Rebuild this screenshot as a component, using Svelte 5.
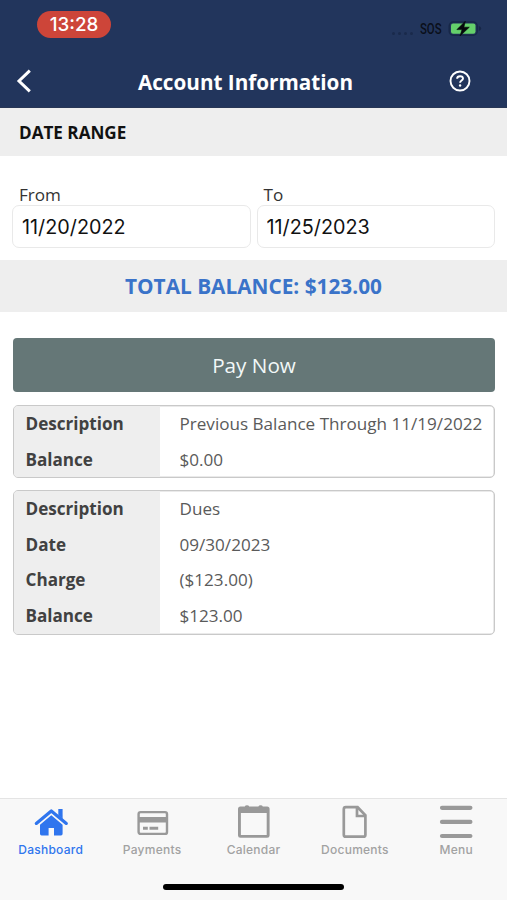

<script>
    let fromDate = "11/20/2022";
    let toDate = "11/25/2023";
    let activeTab = "Dashboard";

    const entries = [
        [
            { label: "Description", value: "Previous Balance Through 11/19/2022" },
            { label: "Balance", value: "$0.00" },
        ],
        [
            { label: "Description", value: "Dues" },
            { label: "Date", value: "09/30/2023" },
            { label: "Charge", value: "($123.00)" },
            { label: "Balance", value: "$123.00" },
        ],
    ];

    const tabs = ["Dashboard", "Payments", "Calendar", "Documents", "Menu"];
</script>

<div class="screen">
    <header>
        <div class="status-bar">
            <span class="clock">13:28</span>
            <div class="status-right">
                <span class="signal"><i></i><i></i><i></i><i></i></span>
                <span class="sos">SOS</span>
                <svg class="battery" width="34" height="18" viewBox="0 0 34 18">
                    <rect x="1.2" y="2" width="28" height="13.2" rx="4" fill="none" stroke="#172747" stroke-width="1.4" />
                    <path d="M30.8 6.1v5q2.4-.7 2.4-2.5t-2.4-2.5z" fill="#172747" />
                    <rect x="3" y="3.4" width="24.5" height="10.4" rx="2.2" fill="#65d06b" />
                    <path d="M17.3 1.2 8.9 9.6h5.1l-2 6.4 9.3-8.8h-5.4z" fill="#05080c" stroke="#05080c" stroke-width=".6" />
                </svg>
            </div>
        </div>
        <div class="nav-bar">
            <button class="back" aria-label="Back">
                <svg width="18" height="26" viewBox="0 0 18 26">
                    <path d="M14.8 2.6 4 13l10.8 10.4" fill="none" stroke="#fff" stroke-width="3" />
                </svg>
            </button>
            <h1>Account Information</h1>
            <button class="help" aria-label="Help">
                <svg width="22" height="22" viewBox="0 0 22 22" fill="none" stroke="#fff">
                    <circle cx="11" cy="11" r="9.5" stroke-width="1.9" />
                    <path d="M8.1 8.7c0-1.6 1.3-2.5 3-2.5s2.9 1 2.9 2.4c0 2-2.9 2-2.9 4.1" stroke-width="1.9" />
                    <circle cx="11.1" cy="15.5" r="1.2" fill="#fff" stroke="none" />
                </svg>
            </button>
        </div>
    </header>

    <h2>DATE RANGE</h2>

    <div class="dates">
        <label>
            <span>From</span>
            <input type="text" bind:value={fromDate} />
        </label>
        <label>
            <span>To</span>
            <input type="text" bind:value={toDate} />
        </label>
    </div>

    <div class="total"><span>TOTAL BALANCE: $123.00</span></div>

    <main>
        <button class="pay">Pay Now</button>
        {#each entries as entry}
            <div class="card">
                {#each entry as row}
                    <div class="row">
                        <div class="label">{row.label}</div>
                        <div class="value">{row.value}</div>
                    </div>
                {/each}
            </div>
        {/each}
    </main>

    <footer>
        <nav>
            {#each tabs as tab}
                <button class="tab" class:active={activeTab === tab} on:click={() => (activeTab = tab)}>
                    <svg width="36" height="36" viewBox="0 0 36 36">
                        {#if tab === "Dashboard"}
                            <path d="M3.3 19.4 18.3 7l15 12.4" fill="none" stroke="currentColor" stroke-width="3.2" stroke-linecap="round" stroke-linejoin="round" />
                            <path d="M25.3 5h4.3v10l-4.3-4z" fill="currentColor" />
                            <path d="M7 20.8 18.3 11.3l11.3 9.5v9q0 1.7-1.6 1.7h-7v-7.5h-5.4v7.5H8.6q-1.6 0-1.6-1.7z" fill="currentColor" />
                        {:else if tab === "Payments"}
                            <rect x="4.6" y="8.1" width="28.4" height="21.8" rx="2" fill="none" stroke="currentColor" stroke-width="2.4" />
                            <path d="M4.5 13h28.6v5.5H4.5z" fill="currentColor" />
                            <path d="M9 24.2h4.8M15.5 24.2h8.7" stroke="currentColor" stroke-width="3" />
                        {:else if tab === "Calendar"}
                            <path d="M4.5 2.6h4.3q.4-1.4 2.2-1.4t2.2 1.4h9.2q.4-1.4 2.2-1.4t2.2 1.4h4.3q2.5 0 2.5 2.5v26.3q0 2.4-2.5 2.4H4.5Q2 33.8 2 31.400V5.100q0-2.500 2.500-2.500zM4.900 9v22h25.800V9z" fill="currentColor" fill-rule="evenodd" />
                        {:else if tab === "Documents"}
                            <path d="M8.8 3.2h11.8l7.8 8v19.5q0 2-2 2H8.8q-2 0-2-2V5.2q0-2 2-2z" fill="none" stroke="currentColor" stroke-width="2.7" />
                            <path d="M20 4v8h8" fill="none" stroke="currentColor" stroke-width="2.7" />
                        {:else}
                            <path d="M4 3.800h28.400M4 17.900h28.400M4 32h28.400" stroke="currentColor" stroke-width="4.200" stroke-linecap="round" />
                        {/if}
                    </svg>
                    <span>{tab}</span>
                </button>
            {/each}
        </nav>
        <div class="home-indicator"></div>
    </footer>
</div>

<style>
    :global(body) {
        margin: 0;
        background: #fff;
    }

    .screen {
        width: 507px;
        height: 900px;
        display: flex;
        flex-direction: column;
        overflow: hidden;
        background: #fff;
        font-family: "Open Sans", sans-serif;
    }

    button {
        padding: 0;
        border: 0;
        background: none;
        font-family: inherit;
        display: flex;
        align-items: center;
        justify-content: center;
    }

    header {
        height: 108px;
        box-sizing: border-box;
        background: #22355c;
        border-bottom: 1px solid #283655;
        flex: none;
    }

    .status-bar {
        height: 54px;
        display: flex;
        justify-content: space-between;
        padding: 0 25px 0 37px;
    }

    .clock {
        width: 74px;
        height: 27px;
        margin-top: 11px;
        border-radius: 14px;
        background: #cd4539;
        color: #fff;
        font: 500 18.8px/28px Inter, sans-serif;
        text-align: center;
    }

    .status-right {
        display: flex;
        align-items: center;
        height: 18px;
        margin-top: 20px;
    }

    .signal {
        display: flex;
        gap: 3px;
        margin: 9px 7px 0 0;
    }

    .signal i {
        width: 3px;
        height: 3px;
        border-radius: 50%;
        background: #1a2a4b;
    }

    .sos {
        width: 23px;
        margin-right: 5px;
        color: #0a0f1a;
        font: 500 14px/18px Roboto, sans-serif;
        transform: scaleX(0.81);
        transform-origin: left;
        white-space: nowrap;
    }

    .nav-bar {
        height: 53px;
        display: flex;
        align-items: center;
        padding: 0 36px 0 15px;
    }

    .back {
        width: 27px;
        justify-content: flex-start;
    }

    h1 {
        flex: 1;
        margin: 2px 0 0 0;
        color: #fff;
        font-size: 20.7px;
        font-weight: 700;
        text-align: center;
    }

    h2 {
        height: 48px;
        margin: 0;
        padding-left: 19px;
        background: #eee;
        color: #111;
        font-size: 17.1px;
        font-weight: 700;
        line-height: 49px;
        flex: none;
    }

    .dates {
        display: flex;
        gap: 6px;
        height: 104px;
        box-sizing: border-box;
        padding: 27px 12px 0;
        flex: none;
    }

    label {
        flex: 1;
        display: flex;
        flex-direction: column;
    }

    label span {
        height: 22px;
        padding-left: 7px;
        color: #333;
        font-size: 17.1px;
        line-height: 23px;
    }

    input {
        width: 100%;
        height: 43px;
        box-sizing: border-box;
        padding: 0 9px;
        border: 1px solid #e9e9e9;
        border-radius: 7px;
        color: #111;
        background: #fff;
        font: 19.8px Inter, sans-serif;
    }

    .total {
        height: 52px;
        background: #eee;
        color: #3a73c9;
        font-size: 20.8px;
        font-weight: 700;
        line-height: 53px;
        text-align: center;
        flex: none;
    }

    main {
        flex: 1;
        display: flex;
        flex-direction: column;
        gap: 12px;
        padding: 26px 12px 0 13px;
    }

    .pay {
        height: 53.5px;
        margin-bottom: 1.5px;
        border-radius: 4px;
        background: #657777;
        color: #f2f8f8;
        font-size: 20.7px;
        flex: none;
    }

    .card {
        border: 1px solid #c9c9c9;
        box-shadow: inset 0 0 0 0.5px #d5d5d5;
        border-radius: 5px;
        overflow: hidden;
    }

    .row {
        display: flex;
        height: 35.6px;
        font-size: 17.1px;
        line-height: 35.6px;
    }

    .label {
        width: 146px;
        box-sizing: border-box;
        padding-left: 11.5px;
        background: #eee;
        color: #414141;
        font-weight: 700;
    }

    .value {
        padding-left: 19.5px;
        color: #5a5a5a;
        white-space: nowrap;
    }

    footer {
        height: 102px;
        box-sizing: border-box;
        border-top: 1px solid #e4e4e4;
        background: #f8f8f8;
        flex: none;
    }

    nav {
        display: flex;
        height: 85px;
    }

    .tab {
        flex: 1;
        flex-direction: column;
        justify-content: flex-start;
        padding-top: 5px;
        color: #999;
    }

    .tab span {
        margin-top: 1px;
        font: 500 12px/17px Inter, sans-serif;
        letter-spacing: 0.25px;
        color: #a2a2a2;
    }

    .tab.active,
    .tab.active span {
        color: #2f75ee;
    }

    .home-indicator {
        width: 181px;
        height: 6px;
        margin: 0 auto;
        border-radius: 3px;
        background: #000;
    }
</style>
